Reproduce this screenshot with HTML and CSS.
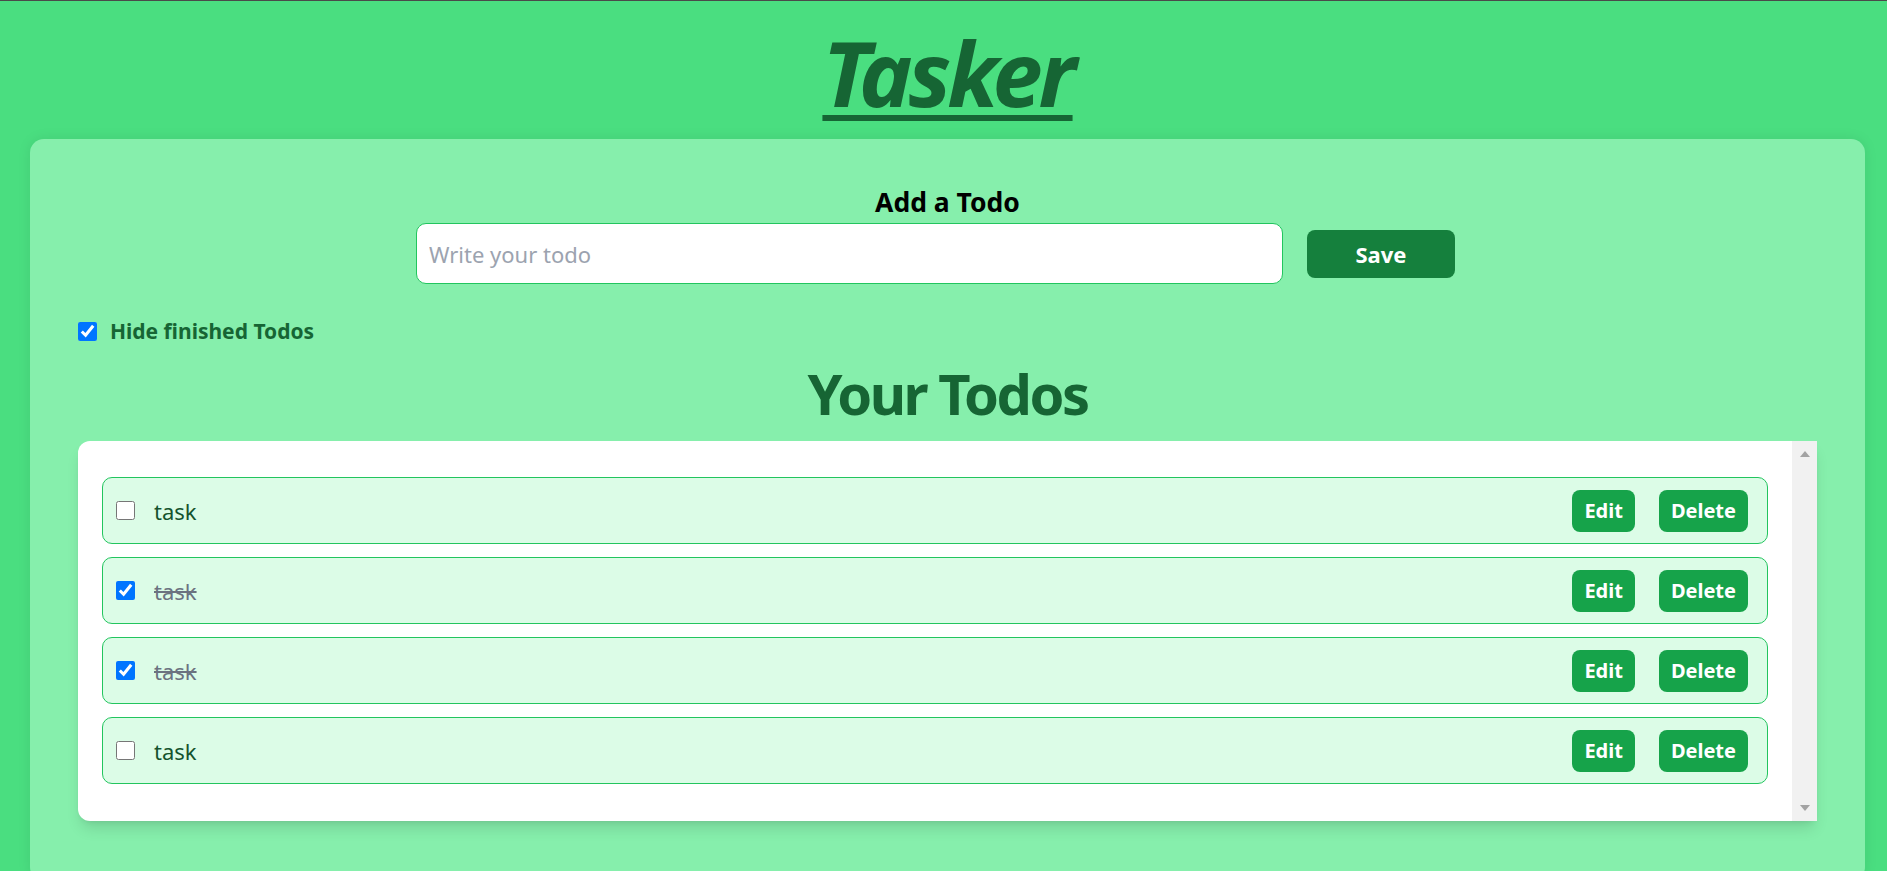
FILE: index.html
```html
<!DOCTYPE html>
<html lang="en">
<head>
<meta charset="utf-8">
<title>Tasker</title>
<link rel="stylesheet" href="styles.css">
</head>
<body>
  <h1 class="title">Tasker</h1>
  <main class="card">
    <section class="add">
      <h2 class="add-title">Add a Todo</h2>
      <div class="add-form">
        <input class="add-input" type="text" placeholder="Write your todo">
        <button class="save-btn">Save</button>
      </div>
    </section>
    <label class="hide-row">
      <input class="check" type="checkbox" checked>
      <span>Hide finished Todos</span>
    </label>
    <h2 class="list-title">Your Todos</h2>
    <div class="list-box">
      <div class="list">
        <div class="row">
          <input class="check" type="checkbox">
          <span class="task">task</span>
          <div class="actions"><button class="btn">Edit</button><button class="btn">Delete</button></div>
        </div>
        <div class="row">
          <input class="check" type="checkbox" checked>
          <span class="task done">task</span>
          <div class="actions"><button class="btn">Edit</button><button class="btn">Delete</button></div>
        </div>
        <div class="row">
          <input class="check" type="checkbox" checked>
          <span class="task done">task</span>
          <div class="actions"><button class="btn">Edit</button><button class="btn">Delete</button></div>
        </div>
        <div class="row">
          <input class="check" type="checkbox">
          <span class="task">task</span>
          <div class="actions"><button class="btn">Edit</button><button class="btn">Delete</button></div>
        </div>
      </div>
      <div class="scrollbar">
        <span class="arrow-up"></span>
        <span class="arrow-down"></span>
      </div>
    </div>
  </main>
</body>
</html>
```

FILE: styles.css
```css
* { box-sizing: border-box; }

html, body { height: 100%; }

body {
  margin: 0;
  border-top: 1px solid #4a4a4a;
  background: #4ade80;
  padding: 0 22px 0 30px;
  font-family: "Noto Sans", "Open Sans", sans-serif;
  overflow: hidden;
}

.title {
  margin: 26px 0 22px;
  text-align: center;
  font-size: 90px;
  line-height: 90px;
  font-weight: 700;
  font-style: italic;
  letter-spacing: -4px;
  color: #166534;
  text-decoration: underline;
  text-decoration-thickness: 6px;
  text-underline-offset: 8px;
}

.card {
  background: #86efac;
  border-radius: 14px;
  padding: 46px 48px 60px;
  box-shadow: 0 0 14px rgba(0, 0, 0, 0.08);
}

.add { display: flex; flex-direction: column; align-items: center; }

.add-title {
  margin: 0;
  font-size: 26.5px;
  line-height: 34px;
  font-weight: 700;
  color: #000;
}

.add-form {
  margin-top: 4px;
  display: flex;
  justify-content: center;
  align-items: center;
  width: 100%;
}

.add-input {
  width: 867px;
  height: 61px;
  border: 1px solid #22c55e;
  border-radius: 10px;
  padding: 0 12px;
  font-family: "Noto Sans", sans-serif;
  font-size: 22px;
  color: #111;
  background: #fff;
  outline: none;
}
.add-input::placeholder { color: #9ca3af; }

.save-btn {
  width: 148px;
  height: 48px;
  margin: 0 24px;
  border: none;
  border-radius: 8px;
  background: #15803d;
  color: #fff;
  font-family: "Noto Sans", sans-serif;
  font-size: 22px;
  font-weight: 700;
}

.hide-row {
  margin-top: 32px;
  display: flex;
  width: fit-content;
  align-items: center;
  gap: 13px;
  height: 30px;
  font-size: 21px;
  font-weight: 700;
  color: #166534;
}

.check {
  width: 19px;
  height: 19px;
  margin: 0;
  flex: none;
}

.list-title {
  margin: 12px 0 13px;
  text-align: center;
  font-size: 56px;
  line-height: 70px;
  font-weight: 700;
  letter-spacing: -2.5px;
  color: #166534;
}

.list-box {
  display: flex;
  background: #fff;
  border-radius: 12px 0 0 12px;
  box-shadow: 0 10px 15px -3px rgba(0, 0, 0, 0.12), 0 4px 6px -4px rgba(0, 0, 0, 0.1);
}

.list {
  flex: 1;
  padding: 36px 24px 37px;
  display: flex;
  flex-direction: column;
  gap: 13px;
}

.row {
  height: 67px;
  display: flex;
  align-items: center;
  padding: 0 19px 0 13px;
  background: #dcfce7;
  border: 1px solid #22c55e;
  border-radius: 10px;
}

.task {
  flex: 1;
  margin-left: 19px;
  font-size: 22px;
  color: #14532d;
}
.task.done {
  color: #6b7280;
  text-decoration: line-through;
}

.actions { display: flex; gap: 24px; }

.btn {
  height: 42px;
  padding: 0 12px;
  border: none;
  border-radius: 8px;
  background: #16a34a;
  color: #fff;
  font-family: "Noto Sans", sans-serif;
  font-size: 20px;
  font-weight: 700;
}

.scrollbar {
  width: 25px;
  background: #f1f1f1;
  display: flex;
  flex-direction: column;
  justify-content: space-between;
  align-items: center;
  padding: 10px 0;
}

.arrow-up {
  width: 0; height: 0;
  border-left: 5.5px solid transparent;
  border-right: 5.5px solid transparent;
  border-bottom: 6px solid #a3a3a3;
}
.arrow-down {
  width: 0; height: 0;
  border-left: 5.5px solid transparent;
  border-right: 5.5px solid transparent;
  border-top: 6px solid #a3a3a3;
}
```
